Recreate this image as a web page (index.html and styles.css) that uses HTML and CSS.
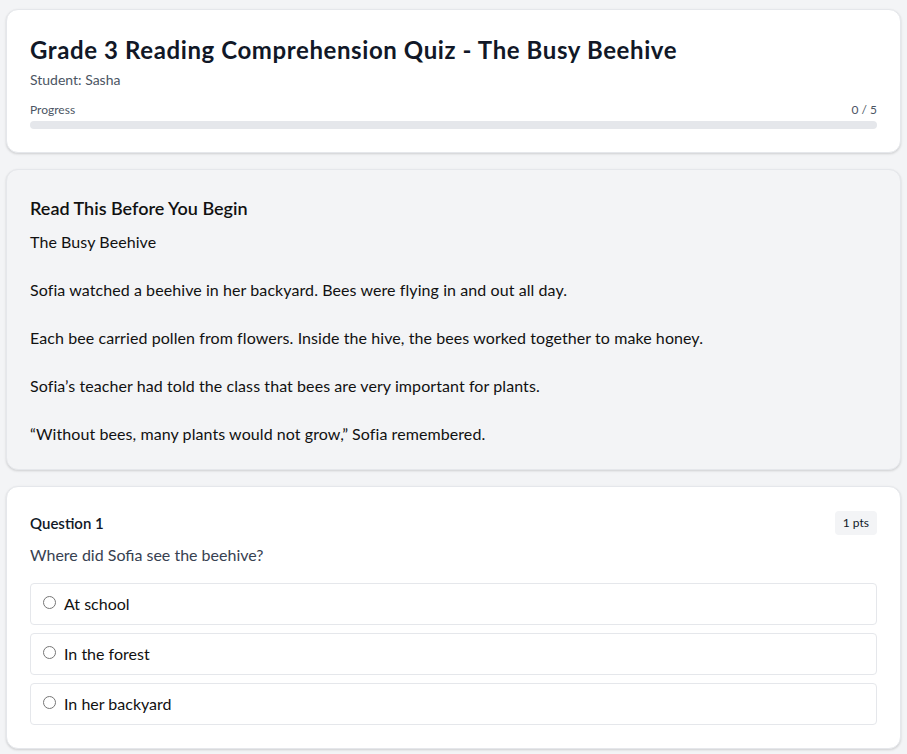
FILE: index.html
```html
<!DOCTYPE html>
<html lang="en">
<head>
<meta charset="utf-8">
<title>Grade 3 Reading Comprehension Quiz</title>
<link rel="stylesheet" href="styles.css">
</head>
<body>
<main class="page">
  <section class="card header">
    <h1 class="title">Grade 3 Reading Comprehension Quiz - The Busy Beehive</h1>
    <div class="student">Student: Sasha</div>
    <div class="progress-row"><span>Progress</span><span>0 / 5</span></div>
    <div class="bar"><div class="bar-fill" style="width:0%"></div></div>
  </section>

  <section class="card passage">
    <h2 class="passage-title">Read This Before You Begin</h2>
    <div class="passage-text">The Busy Beehive

Sofia watched a beehive in her backyard. Bees were flying in and out all day.

Each bee carried pollen from flowers. Inside the hive, the bees worked together to make honey.

Sofia’s teacher had told the class that bees are very important for plants.

“Without bees, many plants would not grow,” Sofia remembered.</div>
  </section>

  <section class="card question">
    <div class="q-head">
      <h3 class="q-title">Question 1</h3>
      <span class="pts">1 pts</span>
    </div>
    <p class="q-text">Where did Sofia see the beehive?</p>
    <div class="options">
      <label class="option"><input type="radio" name="q1"><span>At school</span></label>
      <label class="option"><input type="radio" name="q1"><span>In the forest</span></label>
      <label class="option"><input type="radio" name="q1"><span>In her backyard</span></label>
    </div>
  </section>
</main>
</body>
</html>
```

FILE: styles.css
```css
* { box-sizing: border-box; }
html, body { margin: 0; padding: 0; }
body {
  background: #f3f4f6;
  font-family: "Segoe UI", Lato, "Noto Sans", sans-serif;
  color: #111827;
}
.page {
  padding: 9px 6px 16px;
  display: flex;
  flex-direction: column;
  gap: 16px;
}
.card {
  background: #ffffff;
  border: 1px solid #e5e7eb;
  border-radius: 12px;
  box-shadow: 0 1px 3px rgba(0,0,0,0.1), 0 1px 2px rgba(0,0,0,0.06);
  padding: 24px 23px 23px;
}
.title {
  margin: 0;
  font-size: 24px;
  line-height: 32px;
  font-weight: 700;
  letter-spacing: 0.6px;
  color: #111827;
}
.student {
  margin-top: 4px;
  font-size: 14px;
  line-height: 20px;
  color: #4b5563;
}
.progress-row {
  margin-top: 12px;
  display: flex;
  justify-content: space-between;
  font-size: 12px;
  line-height: 16px;
  color: #4b5563;
}
.bar {
  margin-top: 3px;
  height: 8px;
  border-radius: 9999px;
  background: #e5e7eb;
  overflow: hidden;
}
.bar-fill { height: 100%; background: #3b82f6; }

.passage { background: #f3f4f6; }
.passage-title {
  margin: 0;
  font-size: 18px;
  line-height: 28px;
  font-weight: 600;
  color: #111;
}
.passage-text {
  margin-top: 8px;
  white-space: pre-wrap;
  font-size: 16px;
  line-height: 24px;
  letter-spacing: 0.08px;
  color: #111;
}

.q-head {
  display: flex;
  justify-content: space-between;
  align-items: center;
}
.q-title {
  margin: 0;
  font-size: 15px;
  line-height: 24px;
  font-weight: 600;
  color: #111827;
}
.pts {
  font-size: 12px;
  line-height: 24px;
  padding: 0 8px;
  background: #f3f4f6;
  border-radius: 4px;
  color: #111827;
}
.q-text {
  margin: 8px 0 0;
  font-size: 16px;
  line-height: 24px;
  color: #374151;
}
.options {
  margin-top: 16px;
  display: flex;
  flex-direction: column;
  gap: 8px;
}
.option {
  display: flex;
  align-items: flex-start;
  border: 1px solid #e5e7eb;
  border-radius: 4px;
  padding: 8px 12px;
  font-size: 16px;
  line-height: 24px;
  color: #111;
  cursor: pointer;
}
.option input {
  width: 13px;
  height: 13px;
  margin: 4px 8px 0 0;
  flex: none;
}
```
